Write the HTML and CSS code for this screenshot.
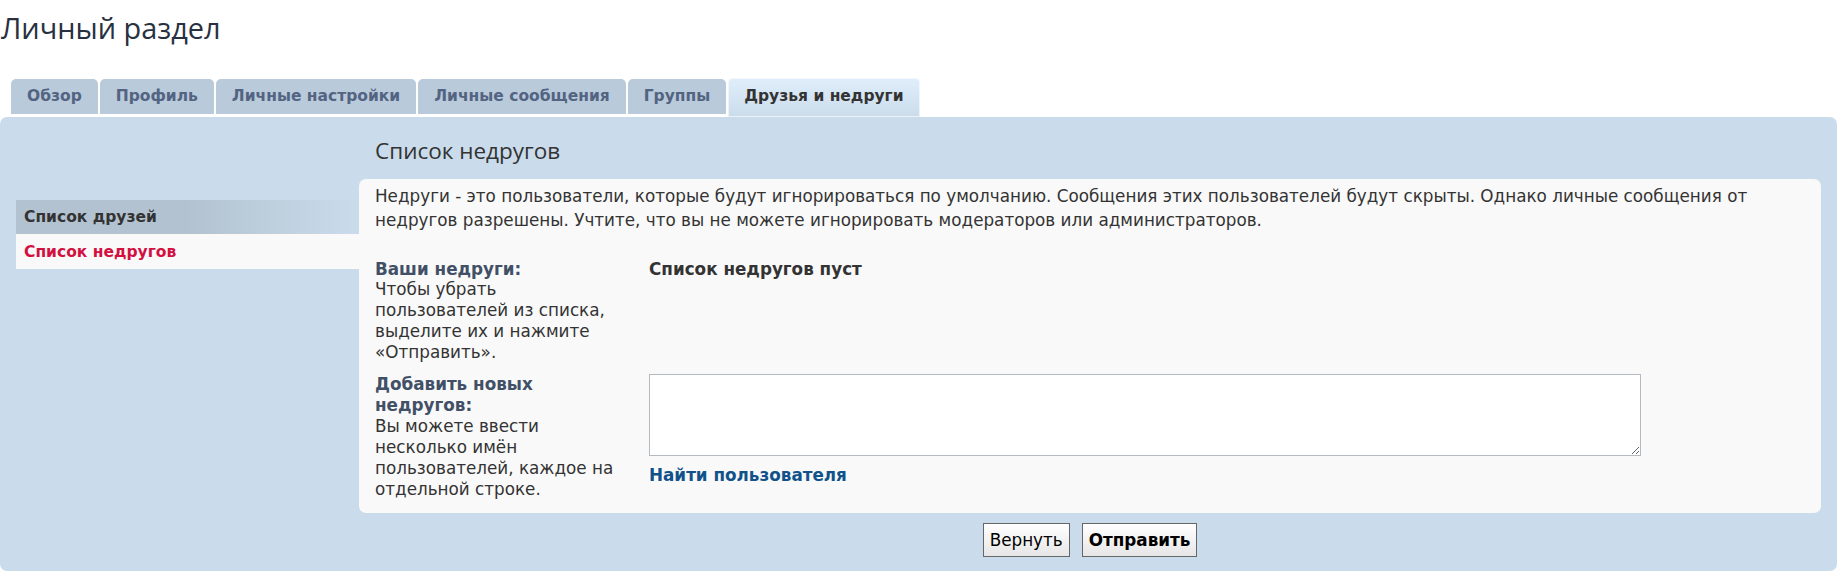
FILE: index.html
```html
<!DOCTYPE html>
<html lang="ru">
<head>
<meta charset="utf-8">
<title>Личный раздел</title>
<link rel="stylesheet" href="styles.css">
</head>
<body>
<div class="page">
  <h1 class="page-title">Личный раздел</h1>
  <ul class="tabs">
    <li class="tab"><a href="#">Обзор</a></li>
    <li class="tab"><a href="#">Профиль</a></li>
    <li class="tab"><a href="#">Личные настройки</a></li>
    <li class="tab"><a href="#">Личные сообщения</a></li>
    <li class="tab"><a href="#">Группы</a></li>
    <li class="tab tab-active"><a href="#">Друзья и недруги</a></li>
  </ul>
  <div class="panel">
    <nav class="side-nav">
      <a class="side-link" href="#">Список друзей</a>
      <a class="side-link side-link-active" href="#">Список недругов</a>
    </nav>
    <main class="main">
      <h2 class="section-title">Список недругов</h2>
      <div class="box">
        <p class="intro">Недруги - это пользователи, которые будут игнорироваться по умолчанию. Сообщения этих пользователей будут скрыты. Однако личные сообщения от недругов разрешены. Учтите, что вы не можете игнорировать модераторов или администраторов.</p>
        <dl class="row">
          <dt class="label"><b>Ваши недруги:</b><span>Чтобы убрать пользователей из списка, выделите их и нажмите «Отправить».</span></dt>
          <dd class="value"><strong class="empty">Список недругов пуст</strong></dd>
        </dl>
        <dl class="row">
          <dt class="label"><b>Добавить новых недругов:</b><span>Вы можете ввести несколько имён пользователей, каждое на отдельной строке.</span></dt>
          <dd class="value">
            <textarea class="inputbox"></textarea>
            <a class="find-link" href="#">Найти пользователя</a>
          </dd>
        </dl>
      </div>
      <div class="actions">
        <button class="button" type="reset">Вернуть</button>
        <button class="button button-primary" type="submit">Отправить</button>
      </div>
    </main>
  </div>
</div>
</body>
</html>
```
FILE: styles.css
```css
html, body {
  margin: 0;
  padding: 0;
  background: #ffffff;
}
body {
  font-family: "DejaVu Sans", Verdana, sans-serif;
  font-size: 16.8px;
  color: #333333;
}
.page {
  margin-right: 5px;
}
.page-title {
  margin: 0;
  height: 78px;
  box-sizing: border-box;
  padding: 10px 0 0 1px;
  font-family: "Open Sans", "Liberation Sans", sans-serif;
  font-weight: 400;
  font-size: 28.9px;
  line-height: 36px;
  color: #28313f;
}
.tabs {
  list-style: none;
  margin: 0;
  padding: 0 0 0 11px;
  display: flex;
  gap: 2px;
  align-items: flex-start;
  height: 39px;
}
.tab a {
  display: block;
  margin-top: 1px;
  height: 35px;
  line-height: 35px;
  padding: 0 16px;
  background: #b9cada;
  border-radius: 5px 5px 0 0;
  color: #536482;
  font-size: 15.5px;
  font-weight: bold;
  text-decoration: none;
  white-space: nowrap;
}
.tab-active a {
  margin-top: 0;
  height: 39px;
  line-height: 37px;
  color: #333333;
  background: linear-gradient(to bottom, #e0eefb 0%, #cadceb 100%);
  box-shadow: 0 0 0 1px rgba(255,255,255,0.6) inset;
}
.panel {
  display: flex;
  background: #cadceb;
  border-radius: 7px;
  padding: 0 16px 14px 16px;
}
.side-nav {
  width: 343px;
  flex: none;
  padding-top: 83px;
  display: flex;
  flex-direction: column;
}
.side-link {
  display: block;
  padding-left: 8px;
  font-size: 15.5px;
  font-weight: bold;
  text-decoration: none;
  color: #333333;
  height: 34px;
  line-height: 34px;
  background: linear-gradient(to right, #b2c2d1 50%, #cadceb 100%);
}
.side-link-active {
  height: 35px;
  line-height: 36px;
  color: #d31141;
  background: #f9f9f9;
}
.main {
  flex: 1;
  min-width: 0;
}
.section-title {
  margin: 21px 0 0 16px;
  height: 41px;
  font-family: "Open Sans", "Liberation Sans", sans-serif;
  font-weight: 400;
  font-size: 22.5px;
  line-height: 25px;
  color: #333333;
}
.box {
  background: #f9f9f9;
  border-radius: 7px;
  padding: 6.25px 16px 13.5px 16px;
}
.intro {
  margin: 0 0 26.3px 0;
  line-height: 23.5px;
}
.row {
  display: flex;
  margin: 0 0 11px 0;
  line-height: 20.9px;
}
.row:last-child {
  margin-bottom: 0;
}
.label {
  width: 274px;
  flex: none;
  box-sizing: border-box;
  padding-right: 16px;
  margin: 0;
}
.label b {
  display: block;
  color: #425067;
}
.label span {
  display: block;
}
.value {
  margin: 0;
  flex: 1;
}
.empty {
  color: #333333;
}
.inputbox {
  display: block;
  width: 992px;
  height: 82px;
  box-sizing: border-box;
  margin: 0;
  border: 1px solid #b4bac0;
  background: #ffffff;
  font: inherit;
}
.find-link {
  display: block;
  margin-top: 9px;
  font-weight: bold;
  color: #105289;
  text-decoration: none;
}
.actions {
  display: flex;
  justify-content: center;
  gap: 12px;
  margin-top: 10px;
}
.button {
  height: 34px;
  padding: 0 6px;
  border: 1px solid #666666;
  background: linear-gradient(to bottom, #ffffff 0%, #e6e6e6 100%);
  font-family: "DejaVu Sans", Verdana, sans-serif;
  font-size: 16.8px;
  color: #000000;
  border-radius: 0;
}
.button-primary {
  font-weight: bold;
}
```
